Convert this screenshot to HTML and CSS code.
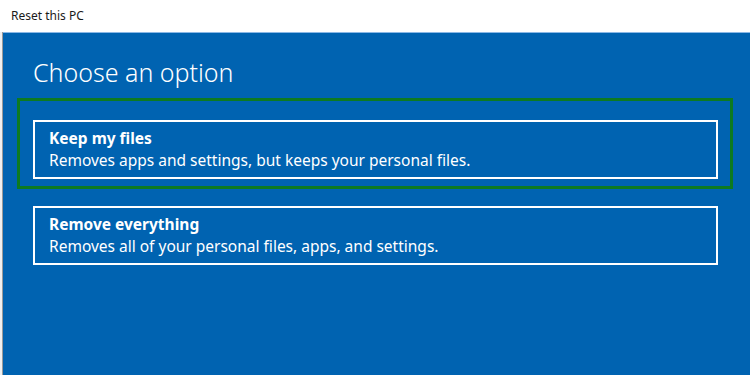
FILE: index.html
```html
<!DOCTYPE html>
<html lang="en">
<head>
<meta charset="utf-8">
<title>Reset this PC</title>
<link rel="stylesheet" href="styles.css">
</head>
<body>
<div class="window">
  <div class="titlebar">Reset this PC</div>
  <div class="frame">
    <div class="edge"></div>
    <main class="content">
      <h1 class="heading">Choose an option</h1>
      <div class="options">
        <div class="option highlighted">
          <div class="highlight"></div>
          <div class="option-title">Keep my files</div>
          <div class="option-desc">Removes apps and settings, but keeps your personal files.</div>
        </div>
        <div class="option">
          <div class="option-title">Remove everything</div>
          <div class="option-desc">Removes all of your personal files, apps, and settings.</div>
        </div>
      </div>
    </main>
  </div>
</div>
</body>
</html>
```

FILE: styles.css
```css
html, body {
  margin: 0;
  padding: 0;
  width: 750px;
  height: 375px;
  overflow: hidden;
  background: #ffffff;
}

.window {
  display: flex;
  flex-direction: column;
  height: 375px;
  font-family: "Noto Sans", "Open Sans", "Liberation Sans", sans-serif;
}

.titlebar {
  height: 32px;
  box-sizing: border-box;
  padding: 8px 0 0 11px;
  font-size: 12px;
  line-height: 16px;
  color: #1a1a1a;
  background: #ffffff;
}

.frame {
  flex: 1;
  display: flex;
}

.edge {
  width: 2px;
  background: #f0f0f0;
  border-right: 1px solid #9a9a9a;
}

.content {
  flex: 1;
  background: #0063b1;
  border-top: 1px solid #8ab8e6;
  padding: 0 32px 0 30px;
  color: #ffffff;
}

.heading {
  margin: 22px 0 0 0;
  font-size: 25px;
  font-weight: 300;
  line-height: 34px;
  color: #ffffff;
}

.options {
  display: flex;
  flex-direction: column;
  gap: 27px;
  margin-top: 31px;
}

.option {
  position: relative;
  border: 2px solid #ffffff;
  padding: 5px 14px 6px 14px;
  font-size: 15.5px;
  line-height: 22px;
}

.option-title {
  font-size: 15.5px;
  font-weight: 700;
}

.highlight {
  position: absolute;
  top: -24px;
  left: -18px;
  right: -17px;
  bottom: -12px;
  border: 3px solid #0d7a21;
  pointer-events: none;
}
```
